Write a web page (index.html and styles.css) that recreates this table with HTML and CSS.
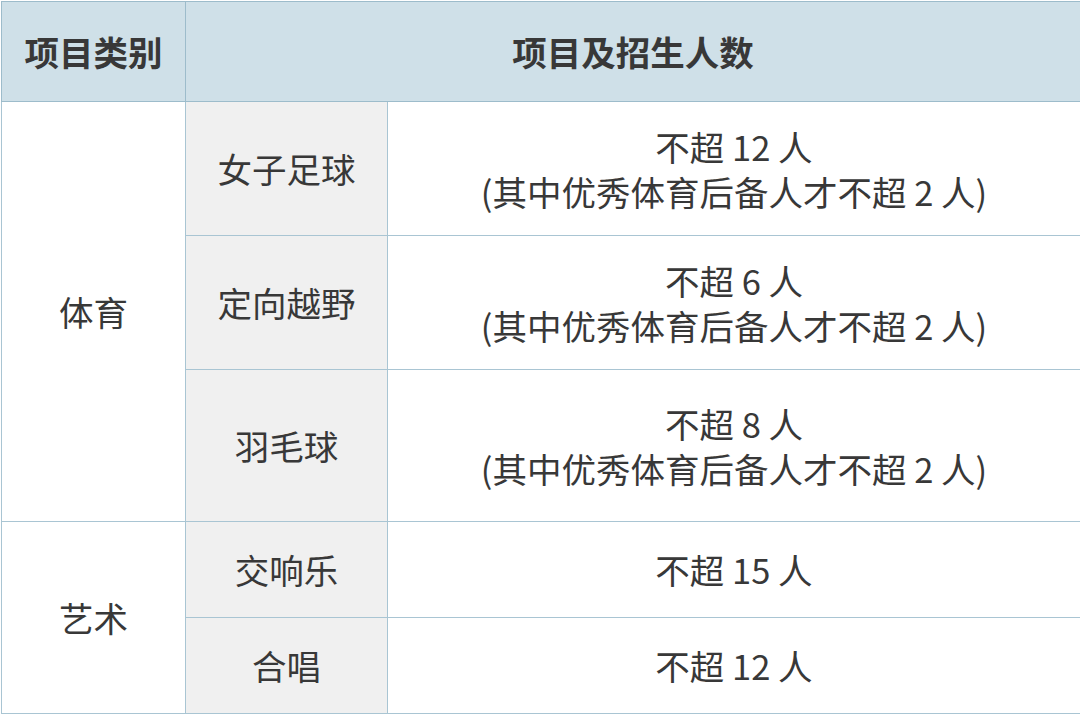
FILE: index.html
```html
<!DOCTYPE html>
<html lang="zh">
<head>
<meta charset="utf-8">
<link rel="stylesheet" href="styles.css">
</head>
<body>
<table class="quota">
  <colgroup>
    <col class="c1"><col class="c2"><col class="c3">
  </colgroup>
  <thead>
    <tr class="head">
      <th>项目类别</th>
      <th colspan="2">项目及招生人数</th>
    </tr>
  </thead>
  <tbody>
    <tr class="r1">
      <td rowspan="3" class="cat">体育</td>
      <td class="item">女子足球</td>
      <td class="num">不超 12 人<br>(其中优秀体育后备人才不超 2 人)</td>
    </tr>
    <tr class="r2">
      <td class="item">定向越野</td>
      <td class="num">不超 6 人<br>(其中优秀体育后备人才不超 2 人)</td>
    </tr>
    <tr class="r3">
      <td class="item">羽毛球</td>
      <td class="num">不超 8 人<br>(其中优秀体育后备人才不超 2 人)</td>
    </tr>
    <tr class="r4">
      <td rowspan="2" class="cat">艺术</td>
      <td class="item">交响乐</td>
      <td class="num">不超 15 人</td>
    </tr>
    <tr class="r5">
      <td class="item">合唱</td>
      <td class="num">不超 12 人</td>
    </tr>
  </tbody>
</table>
</body>
</html>
```

FILE: styles.css
```css
html, body {
  margin: 0;
  padding: 0;
  background: #ffffff;
}
body {
  padding: 1px 0 0 1px;
}
.quota {
  border-collapse: collapse;
  table-layout: fixed;
  width: 1079px;
  font-family: "Noto Sans CJK SC", "Microsoft YaHei", sans-serif;
  font-size: 34.5px;
  color: #383838;
  line-height: 45px;
}
.c1 { width: 184px; }
.c2 { width: 202px; }
.c3 { width: 693px; }
.quota th, .quota td {
  border: 1px solid #a9c5d3;
  text-align: center;
  vertical-align: middle;
  padding: 0;
}
.quota th {
  background: #cfe0e8;
  font-weight: 700;
  border-color: #9dbccb;
}
.head { height: 100px; }
.r1, .r2 { height: 134px; }
.r3 { height: 152px; }
.r4, .r5 { height: 96px; }
.item {
  background: #f0f0f0;
}
.num {
  padding-bottom: 4px;
}
```
